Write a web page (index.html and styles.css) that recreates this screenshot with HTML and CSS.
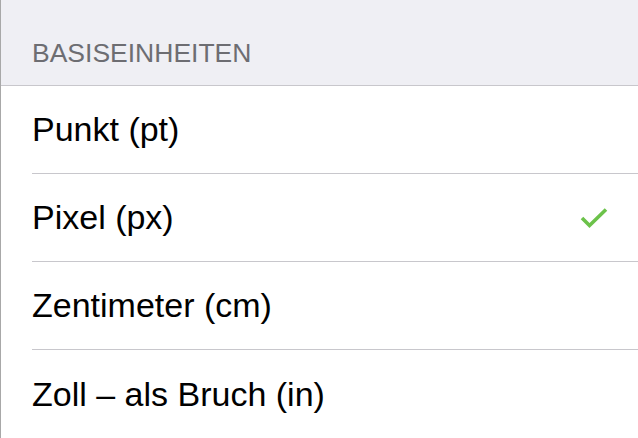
FILE: index.html
```html
<!DOCTYPE html>
<html lang="de">
<head>
    <meta charset="UTF-8">
    <meta name="viewport" content="width=device-width, initial-scale=1.0">
    <title>Basiseinheiten</title>
    <link rel="stylesheet" href="styles.css">
</head>
<body>
    <div class="panel">
        <div class="sectionHead">BASISEINHEITEN</div>
        <ul class="unitList">
            <li class="unit">Punkt (pt)</li>
            <li class="unit">
                <span>Pixel (px)</span>
                <svg class="check" width="28" height="22" viewBox="0 0 28 22">
                    <polyline points="2,11 9.5,18.5 26,2.5" fill="none" stroke="#6cc24a" stroke-width="3.6"/>
                </svg>
            </li>
            <li class="unit">Zentimeter (cm)</li>
            <li class="unit">Zoll – als Bruch (in)</li>
        </ul>
    </div>
</body>
</html>
```

FILE: styles.css
```css
*{padding: 0; margin: 0; box-sizing: border-box;}
ul,li{list-style: none;}
body{background: #fff; font-family: "Liberation Sans", Arial, sans-serif;}

.panel{height: 438px; border-left: 1px solid #a8a8a8; overflow: hidden;}

.sectionHead{height: 86px; padding: 0 0 17px 31px; display: flex; align-items: flex-end;
    background: #efeff4; border-bottom: 1px solid #c8c7cc;
    font-size: 26.5px; line-height: 30px; color: #6d6d72;}

.unitList{padding-left: 31px;}
.unitList .unit{height: 88px; display: flex; align-items: center; justify-content: space-between;
    padding-right: 30px; border-bottom: 1px solid #c8c7cc;
    font-size: 34px; color: #000;}
.unitList .unit:last-child{border-bottom: none;}
.unit .check{display: block;}
```
